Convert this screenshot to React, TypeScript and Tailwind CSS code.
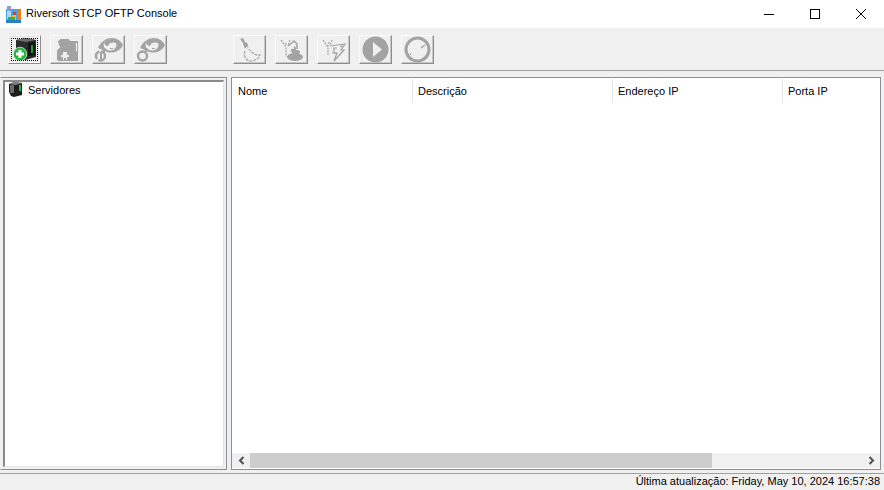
const G = "#a3a3a3";

function Btn({ children, pressed, className = "" }: { children: React.ReactNode; pressed?: boolean; className?: string }) {
  return (
    <div
      className={
        "relative w-[33px] h-[29px] flex items-center justify-center border border-t-[#fbfbfb] border-l-[#fbfbfb] border-r-[#8d8d8d] border-b-[#8d8d8d] shadow-[inset_-1px_-1px_0_#c8c8c8] bg-[#f0f0f0] " +
        (pressed ? "border-t-[#8d8d8d] border-l-[#8d8d8d] shadow-[inset_-1px_-1px_0_#ffffff,inset_1px_1px_0_#e2e2e2] " : "") +
        className
      }
    >
      {children}
    </div>
  );
}

function AddServer() {
  return (
    <svg width="26" height="25" viewBox="0 0 26 25">
      <path d="M4 3 L14 1 L24 3 L24 20 L13 23 L4 21Z" fill="#2b2b2b" />
      <path d="M4 3 L14 1 L23 3 L14 5Z" fill="#6e6e6e" />
      <path d="M16 6 L23 5 L23 18 L16 19Z" fill="#111" />
      <rect x="19" y="8" width="2" height="8" fill="#1f9d3b" />
      <circle cx="8" cy="17" r="6.8" fill="#27b53e" stroke="#e6ffe9" strokeWidth="0.7" />
      <rect x="4" y="15.5" width="8" height="3" fill="#fff" />
      <rect x="6.5" y="13" width="3" height="8" fill="#fff" />
    </svg>
  );
}

function Bag() {
  return (
    <svg width="28" height="26" viewBox="0 0 28 26" shapeRendering="crispEdges">
      <path d="M7 2 H15 L17 4 H25 V24 H9 L5 24 L4 22 V14 L7 10 L5 5Z" fill={G} />
      <rect x="23" y="6" width="1" height="8" fill="#fff" />
      <path d="M10 15 h4 v3 h2 v2 h-2 v3 h-1 v-2 h-2 v2 h-1 v-3 h-2 v-2 h2z" fill="#f0f0f0" />
    </svg>
  );
}

function Eye({ variant }: { variant: number }) {
  return (
    <svg width="31" height="27" viewBox="0 0 31 27">
      <path d="M5 12 C8 5 14 2 19 2 C24 2 28 5 30 9 C27 15 21 18 14 16 L10 14Z" fill={G} />
      <ellipse cx="17" cy="9" rx="6.5" ry="5.5" fill="#f0f0f0" />
      <path d="M11 7 C13 2 21 2 24 7 C20 6 16 6 15 10 C13 10 12 9 11 7Z" fill={G} />
      <rect x="17" y="12" width="3" height="1" fill={G} />
      <circle cx="7.5" cy="20" r="4.5" fill="none" stroke={G} strokeWidth="2.4" strokeDasharray={variant === 0 ? "9 1.5" : "none"} />
      {variant === 0 && <rect x="7" y="16" width="2" height="8" fill={G} />}
      <path d="M10 16 L13 13" stroke={G} strokeWidth="2" />
    </svg>
  );
}

function Broom() {
  return (
    <svg width="26" height="28" viewBox="0 0 26 28">
      <path d="M3 3 L6 2 L8 6 L10 7 L12 11 L9 13 L7 11 L6 7Z" fill={G} />
      <path d="M8 13 L12 10" stroke="#f8f8f8" strokeWidth="1" />
      <path d="M8 15 C6 21 10 26 15 25 C20 24 23 21 23 19 C19 20 15 17 12 13" fill="none" stroke={G} strokeWidth="1.2" strokeDasharray="3 1" />
    </svg>
  );
}

function HandBlob() {
  return (
    <svg width="28" height="26" viewBox="0 0 28 26">
      <path d="M3 3 L8 10 L8 20 M8 8 L8 6 M12 3 L10 9" fill="none" stroke={G} strokeWidth="1.2" strokeDasharray="2 1" />
      <path d="M10 9 L16 4 L19 7 L19 12" fill="none" stroke={G} strokeWidth="1.5" />
      <path d="M13 12 C14 8 18 8 18 12 L17 15 L13 15Z" fill={G} />
      <ellipse cx="17" cy="20" rx="8" ry="4" fill={G} />
      <ellipse cx="18" cy="15" rx="4" ry="2" fill={G} />
      <rect x="13" y="9" width="3" height="3" fill="#f0f0f0" />
    </svg>
  );
}

function HandFlag() {
  return (
    <svg width="28" height="26" viewBox="0 0 28 26">
      <path d="M3 3 L8 10 L8 18 M12 3 L10 8 M9 5 L8 9" fill="none" stroke={G} strokeWidth="1.2" strokeDasharray="2 1" />
      <path d="M10 9 L25 7 L21 13 L24 13 L14 24 L17 16 L14 16" fill="none" stroke={G} strokeWidth="1.2" />
      <path d="M13 11 L17 11 M14 11 L14 16 M12 16 L16 16" stroke={G} strokeWidth="1.2" />
      <path d="M20 9 L23 8 L21 11Z" fill={G} />
    </svg>
  );
}

function Play() {
  return (
    <svg width="27" height="27" viewBox="0 0 27 27">
      <circle cx="13.5" cy="13.5" r="13" fill={G} />
      <path d="M11 6 L20 13.5 L11 21Z" fill="#f0f0f0" />
    </svg>
  );
}

function Stop() {
  return (
    <svg width="27" height="27" viewBox="0 0 27 27">
      <circle cx="13.5" cy="13.5" r="11.5" fill="none" stroke={G} strokeWidth="3" />
      <path d="M17 12 L21 9" stroke={G} strokeWidth="1.5" />
      <rect x="6" y="17" width="1" height="2" fill={G} />
    </svg>
  );
}

function AppLogo() {
  return (
    <svg width="16" height="17" viewBox="0 0 16 17" shapeRendering="crispEdges">
      <rect x="0" y="3" width="15" height="14" fill="#3ba7e8" />
      <rect x="1" y="0" width="4" height="5" fill="#8f9ad0" />
      <rect x="1" y="5" width="4" height="8" fill="#a8dcf7" />
      <rect x="6" y="9" width="4" height="5" fill="#eac12b" />
      <rect x="11" y="4" width="4" height="10" fill="#f27a1f" />
      <rect x="2" y="11" width="7" height="3" fill="#35b04a" />
      <rect x="7" y="6" width="3" height="3" fill="#e03a2a" />
      <rect x="0" y="14" width="15" height="3" fill="#2a7fc8" />
    </svg>
  );
}

function TreeIcon() {
  return (
    <svg width="14" height="16" viewBox="0 0 14 16">
      <path d="M0 2 L5 0 L13 1 L13 13 L5 15 L2 14 L0 10Z" fill="#1d1d1d" />
      <path d="M0 2 L5 0 L13 1 L7 3Z" fill="#808080" />
      <rect x="1" y="3" width="4" height="8" fill="#6a6a6a" />
      <rect x="10" y="3" width="2" height="6" fill="#1cc04a" />
    </svg>
  );
}

const columns = [
  { name: "Nome", w: "w-[181px]" },
  { name: "Descrição", w: "w-[200px]" },
  { name: "Endereço IP", w: "w-[170px]" },
  { name: "Porta IP", w: "w-[100px]" },
];

export default function App() {
  return (
    <div className="w-[884px] h-[490px] flex flex-col bg-[#f0f0f0] overflow-hidden font-['Liberation_Sans',sans-serif] text-[11px] text-black">
      <div className="h-[28px] bg-white flex items-center shrink-0">
        <div className="ml-[6px] w-[16px] flex"><AppLogo /></div>
        <span className="ml-[4px] leading-none mb-[2px]">Riversoft STCP OFTP Console</span>
        <div className="ml-auto flex h-full">
          <div className="w-[46px] flex items-center justify-center">
            <div className="w-[10px] h-px bg-black" />
          </div>
          <div className="w-[46px] flex items-center justify-center">
            <div className="w-[10px] h-[10px] border border-black" />
          </div>
          <div className="w-[46px] flex items-center justify-center">
            <svg width="10" height="10" viewBox="0 0 10 10"><path d="M0 0 L10 10 M10 0 L0 10" stroke="#000" strokeWidth="1" /></svg>
          </div>
        </div>
      </div>

      <div className="h-[43px] shrink-0 border-b border-[#a0a0a0] flex items-start pt-[7px] pl-[8px]">
        <div className="flex gap-[9px]">
          <Btn pressed>
            <div className="absolute inset-[2px] border border-dotted border-black" />
            <AddServer />
          </Btn>
          <Btn><Bag /></Btn>
          <Btn><Eye variant={0} /></Btn>
          <Btn><Eye variant={1} /></Btn>
        </div>
        <div className="flex gap-[9px] ml-[66px]">
          <Btn><Broom /></Btn>
          <Btn><HandBlob /></Btn>
          <Btn><HandFlag /></Btn>
          <Btn><Play /></Btn>
          <Btn><Stop /></Btn>
        </div>
      </div>

      <div className="flex-1 flex min-h-0 pt-[6px] pb-[3px] pr-[3px]">
        <div className="w-[227px] border border-[#8a8f98] border-l-[#f0f0f0] bg-[#f0f0f0] pt-[2px] pl-[2px] pr-[2px] pb-[2px]">
          <div className="h-full bg-white border-t-2 border-l-2 border-r border-b border-t-[#8a8a8a] border-l-[#8a8a8a] border-r-[#e3e3e3] border-b-[#e3e3e3] pl-[4px] flex items-start">
            <div className="flex items-center gap-[5px] h-[16px]">
              <TreeIcon />
              <span>Servidores</span>
            </div>
          </div>
        </div>

        <div className="ml-[4px] flex-1 min-w-0 border border-[#8a8f98] bg-white flex flex-col">
          <div className="flex h-[25px] pt-[1px] shrink-0 overflow-hidden">
            {columns.map((c) => (
              <div key={c.name} className={c.w + " shrink-0 border-r border-[#e5e5e5] pl-[5px] first:pl-[6px] flex items-center last:border-r-0"}>
                {c.name}
              </div>
            ))}
          </div>
          <div className="flex-1" />
          <div className="h-[15px] mb-[1px] bg-[#f0f0f0] flex shrink-0 items-stretch">
            <div className="w-[18px] flex items-center justify-center">
              <svg width="7" height="9" viewBox="0 0 7 9"><path d="M5.5 1 L2 4.5 L5.5 8" fill="none" stroke="#505050" strokeWidth="2" /></svg>
            </div>
            <div className="w-[462px] bg-[#cdcdcd]" />
            <div className="flex-1" />
            <div className="w-[18px] flex items-center justify-center">
              <svg width="7" height="9" viewBox="0 0 7 9"><path d="M1.5 1 L5 4.5 L1.5 8" fill="none" stroke="#505050" strokeWidth="2" /></svg>
            </div>
          </div>
        </div>
      </div>

      <div className="h-[17px] shrink-0 border-t border-[#a0a0a0] flex items-center justify-end pr-[4px] pb-[2px]">
        <span>Última atualização: Friday, May 10, 2024 16:57:38</span>
      </div>
    </div>
  );
}
